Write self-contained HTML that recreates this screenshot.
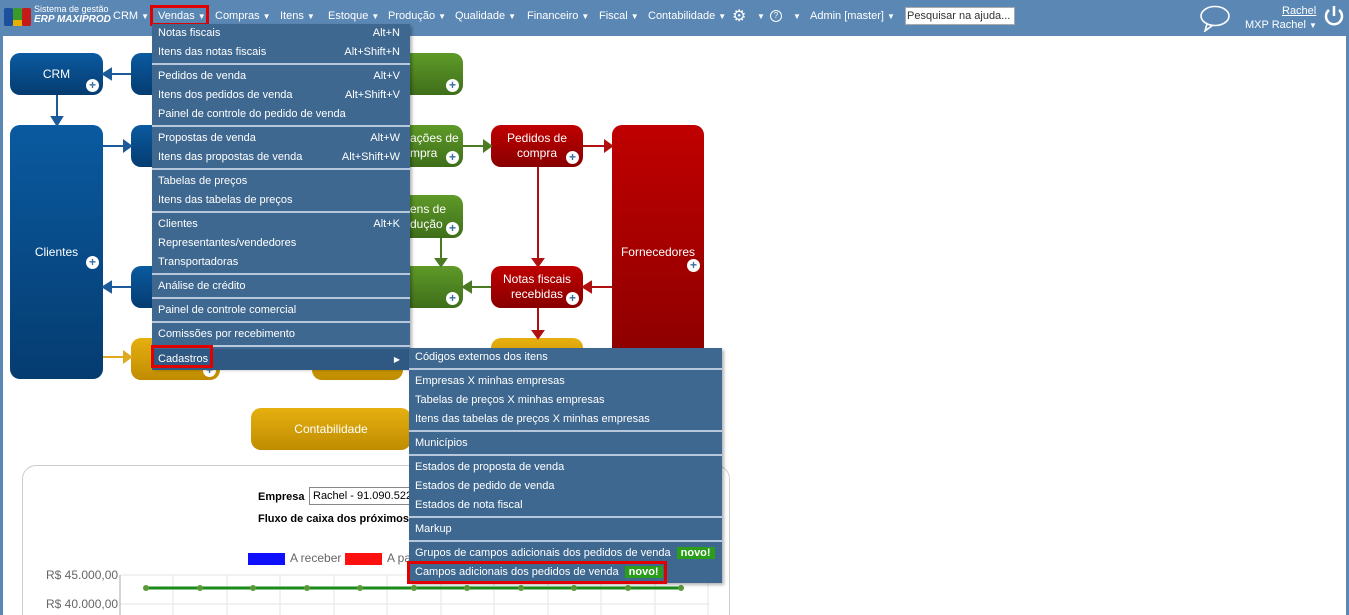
<!DOCTYPE html>
<html style="overflow:hidden;height:615px"><head><meta charset="utf-8"><style>
*{box-sizing:border-box;margin:0;padding:0}
body{width:1349px;height:615px;overflow:hidden;background:#5b87b4;font-family:"Liberation Sans",sans-serif;position:relative}
.page{position:absolute;left:3px;top:36px;width:1343px;height:579px;background:#fff;overflow:hidden}
.bar{position:absolute;top:0;left:0;width:1349px;height:36px;color:#fff;font-size:11px}
.bar span.m{position:absolute;top:10px;white-space:nowrap}
.tri{font-size:8px;margin-left:3px}
.box{position:absolute;border-radius:10px;color:#fff;font-size:12px;text-align:center;display:flex;align-items:center;justify-content:center;line-height:15px;white-space:nowrap;overflow:hidden}
.blue{background:linear-gradient(#0a5aa0,#053c70)}
.green{background:linear-gradient(#5e9a28,#3f6e1a)}
.red{background:linear-gradient(#c00000,#880000)}
.yel{background:linear-gradient(#e6b010,#bf8c00)}
.plus{position:absolute;right:4px;bottom:3px;width:13px;height:13px;border-radius:50%;background:#fff;color:#3a6da0;font-size:12px;line-height:12px;text-align:center;font-weight:bold}
.menu{position:absolute;background:#3f6890;color:#fff;font-size:11px;box-shadow:2px 2px 3px rgba(0,0,0,.3)}
.menu div.i{height:19px;line-height:19px;padding-left:6px;position:relative;white-space:nowrap}
.menu div.i b{position:absolute;right:10px;font-weight:normal}
.menu div.s{height:5px;position:relative}
.menu div.s:after{content:"";position:absolute;left:0;right:0;top:1px;height:2px;background:#b8c8dc}
.novo{background:#2a9d1a;color:#fff;font-weight:bold;padding:0 4px;margin-left:6px;font-size:11px}
.redbox{position:absolute;border:3px solid #e00000}
</style></head><body>
<div class="page">
<div style="position:absolute;left:19px;top:429px;width:708px;height:170px;border:1px solid #ccc;border-radius:14px;background:#fff"></div>
</div>
<div class="bar">
<div style="position:absolute;left:4px;top:8px;width:9px;height:18px;background:#1c4f9c;border-radius:2px"></div>
<div style="position:absolute;left:13px;top:8px;width:9px;height:18px;background:#3a9a2a;border-radius:2px"></div>
<div style="position:absolute;left:13px;top:20px;width:9px;height:6px;background:#e8b000"></div>
<div style="position:absolute;left:22px;top:8px;width:9px;height:18px;background:#c41a1a;border-radius:2px"></div>
<div style="position:absolute;left:34px;top:4px;font-size:9px;line-height:10px">Sistema de gestão<br><i style="font-weight:bold;font-size:10px">ERP MAXIPROD</i></div>
<span class="m" style="left:113px">CRM<span class="tri">▼</span></span>
<span class="m" style="left:158px">Vendas<span class="tri">▼</span></span>
<span class="m" style="left:215px">Compras<span class="tri">▼</span></span>
<span class="m" style="left:280px">Itens<span class="tri">▼</span></span>
<span class="m" style="left:328px">Estoque<span class="tri">▼</span></span>
<span class="m" style="left:388px">Produção<span class="tri">▼</span></span>
<span class="m" style="left:455px">Qualidade<span class="tri">▼</span></span>
<span class="m" style="left:527px">Financeiro<span class="tri">▼</span></span>
<span class="m" style="left:599px">Fiscal<span class="tri">▼</span></span>
<span class="m" style="left:648px">Contabilidade<span class="tri">▼</span></span>
<span class="m" style="left:732px;top:6px;font-size:16px">⚙</span><span class="m" style="left:754px"><span class="tri">▼</span></span>
<span class="m" style="left:770px;top:10px;width:12px;height:12px;border:1.5px solid #fff;border-radius:50%;font-size:8px;text-align:center;line-height:9px">?</span><span class="m" style="left:790px"><span class="tri">▼</span></span>
<span class="m" style="left:810px">Admin [master]<span class="tri">▼</span></span>
<div style="position:absolute;left:905px;top:7px;width:110px;height:18px;background:#fff;border:1px solid #aaa;color:#333;font-size:11px;padding:2px 1px">Pesquisar na ajuda...</div>
<svg style="position:absolute;left:1199px;top:4px" width="33" height="28"><ellipse cx="16" cy="12" rx="14" ry="9.5" fill="none" stroke="#fff" stroke-width="1.6"/><path d="M8 20 L6 27 L14 21" fill="none" stroke="#fff" stroke-width="1.6"/></svg>
<span class="m" style="left:1282px;top:5px;text-decoration:underline">Rachel</span>
<span class="m" style="left:1245px;top:19px">MXP Rachel<span class="tri">▼</span></span>
<svg style="position:absolute;left:1323px;top:4px" width="22" height="24"><path d="M6 6 A8 8 0 1 0 16 6" fill="none" stroke="#fff" stroke-width="2.5"/><line x1="11" y1="2" x2="11" y2="12" stroke="#fff" stroke-width="2.5"/></svg>
</div>
<div class="redbox" style="left:150px;top:5px;width:59px;height:21px"></div>

<div class="box blue" style="left:10px;top:53px;width:93px;height:42px">CRM<span class="plus">+</span></div>
<div class="box blue" style="left:131px;top:53px;width:40px;height:42px"></div>
<div class="box green" style="left:400px;top:53px;width:63px;height:42px"><span class="plus">+</span></div>
<div class="box blue" style="left:10px;top:125px;width:93px;height:254px">Clientes<span class="plus" style="bottom:110px">+</span></div>
<div class="box blue" style="left:131px;top:125px;width:40px;height:42px"></div>
<div class="box green" style="left:400px;top:125px;width:63px;height:42px;justify-content:flex-start;padding-left:10px;text-align:left">ações de<br>mpra<span class="plus">+</span></div>
<div class="box red" style="left:491px;top:125px;width:92px;height:42px">Pedidos de<br>compra<span class="plus">+</span></div>
<div class="box red" style="left:612px;top:125px;width:92px;height:255px">Fornecedores<span class="plus" style="bottom:108px">+</span></div>
<div class="box green" style="left:400px;top:195px;width:63px;height:43px;justify-content:flex-start;padding-left:10px;text-align:left">ens de<br>dução<span class="plus">+</span></div>
<div class="box green" style="left:400px;top:266px;width:63px;height:42px"><span class="plus">+</span></div>
<div class="box red" style="left:491px;top:266px;width:92px;height:42px">Notas fiscais<br>recebidas<span class="plus">+</span></div>
<div class="box blue" style="left:131px;top:266px;width:40px;height:42px"></div>
<div class="box yel" style="left:131px;top:338px;width:89px;height:42px"><span class="plus">+</span></div>
<div class="box yel" style="left:312px;top:338px;width:91px;height:42px"></div>
<div class="box yel" style="left:491px;top:338px;width:92px;height:42px"></div>
<div class="box yel" style="left:251px;top:408px;width:160px;height:42px">Contabilidade</div>
<svg style="position:absolute;left:0;top:0" width="720" height="400">
<g stroke="#1c5a9a" stroke-width="2" fill="#1c5a9a"><line x1="57" y1="95" x2="57" y2="118"/><path d="M52 117 L62 117 L57 125Z"/>
<line x1="103" y1="146" x2="125" y2="146"/><path d="M124 141 L131 146 L124 151Z"/>
<line x1="111" y1="74" x2="131" y2="74"/><path d="M111 69 L103 74 L111 79Z"/>
<line x1="111" y1="287" x2="131" y2="287"/><path d="M111 282 L103 287 L111 292Z"/></g>
<g stroke="#4a7a22" stroke-width="2" fill="#4a7a22"><line x1="463" y1="146" x2="484" y2="146"/><path d="M484 141 L491 146 L484 151Z"/>
<line x1="441" y1="238" x2="441" y2="259"/><path d="M436 259 L446 259 L441 266Z"/>
<line x1="471" y1="287" x2="491" y2="287"/><path d="M471 282 L463 287 L471 292Z"/></g>
<g stroke="#b01010" stroke-width="2" fill="#b01010"><line x1="583" y1="146" x2="605" y2="146"/><path d="M605 141 L612 146 L605 151Z"/>
<line x1="538" y1="167" x2="538" y2="259"/><path d="M533 259 L543 259 L538 266Z"/>
<line x1="591" y1="287" x2="612" y2="287"/><path d="M591 282 L583 287 L591 292Z"/>
<line x1="538" y1="308" x2="538" y2="331"/><path d="M533 331 L543 331 L538 338Z"/></g>
<g stroke="#e0a820" stroke-width="2" fill="#e0a820"><line x1="103" y1="357" x2="124" y2="357"/><path d="M124 352 L131 357 L124 362Z"/></g>
</svg>

<div style="position:absolute;left:258px;top:491px;font-size:11px;font-weight:bold">Empresa</div>
<div style="position:absolute;left:309px;top:487px;width:110px;height:18px;border:1px solid #888;font-size:11px;padding:2px 3px;overflow:hidden;white-space:nowrap">Rachel - 91.090.522</div>
<div style="position:absolute;left:258px;top:513px;font-size:11px;font-weight:bold;white-space:nowrap">Fluxo de caixa dos próximos</div>
<div style="position:absolute;left:248px;top:553px;width:37px;height:12px;background:#1010ff"></div>
<div style="position:absolute;left:290px;top:551px;font-size:12px;color:#666">A receber</div>
<div style="position:absolute;left:345px;top:553px;width:37px;height:12px;background:#ff1010"></div>
<div style="position:absolute;left:387px;top:551px;font-size:12px;color:#666">A pa</div>
<div style="position:absolute;left:46px;top:568px;font-size:12px;color:#666">R$ 45.000,00</div>
<div style="position:absolute;left:46px;top:597px;font-size:12px;color:#666">R$ 40.000,00</div>
<svg style="position:absolute;left:110px;top:570px" width="600" height="45">
<g stroke="#e6e6e6"><line x1="10" y1="5" x2="600" y2="5"/><line x1="10" y1="34" x2="600" y2="34"/>
<line x1="63" y1="5" x2="63" y2="45"/><line x1="117" y1="5" x2="117" y2="45"/><line x1="170" y1="5" x2="170" y2="45"/><line x1="224" y1="5" x2="224" y2="45"/><line x1="277" y1="5" x2="277" y2="45"/><line x1="331" y1="5" x2="331" y2="45"/><line x1="384" y1="5" x2="384" y2="45"/><line x1="438" y1="5" x2="438" y2="45"/><line x1="491" y1="5" x2="491" y2="45"/><line x1="545" y1="5" x2="545" y2="45"/><line x1="598" y1="5" x2="598" y2="45"/></g>
<line x1="10" y1="5" x2="10" y2="45" stroke="#aaa"/>
<line x1="36" y1="18" x2="571" y2="18" stroke="#1a8a1a" stroke-width="3"/>
<g fill="#5a9a3a"><circle cx="36" cy="18" r="3"/><circle cx="90" cy="18" r="3"/><circle cx="143" cy="18" r="3"/><circle cx="197" cy="18" r="3"/><circle cx="250" cy="18" r="3"/><circle cx="304" cy="18" r="3"/><circle cx="357" cy="18" r="3"/><circle cx="411" cy="18" r="3"/><circle cx="464" cy="18" r="3"/><circle cx="518" cy="18" r="3"/><circle cx="571" cy="18" r="3"/></g>
</svg>

<div class="menu" style="left:152px;top:24px;width:258px;height:344px">
<div class="i">Notas fiscais<b>Alt+N</b></div>
<div class="i">Itens das notas fiscais<b>Alt+Shift+N</b></div><div class="s"></div>
<div class="i">Pedidos de venda<b>Alt+V</b></div>
<div class="i">Itens dos pedidos de venda<b>Alt+Shift+V</b></div>
<div class="i">Painel de controle do pedido de venda</div><div class="s"></div>
<div class="i">Propostas de venda<b>Alt+W</b></div>
<div class="i">Itens das propostas de venda<b>Alt+Shift+W</b></div><div class="s"></div>
<div class="i">Tabelas de preços</div>
<div class="i">Itens das tabelas de preços</div><div class="s"></div>
<div class="i">Clientes<b>Alt+K</b></div>
<div class="i">Representantes/vendedores</div>
<div class="i">Transportadoras</div><div class="s"></div>
<div class="i">Análise de crédito</div><div class="s"></div>
<div class="i">Painel de controle comercial</div><div class="s"></div>
<div class="i">Comissões por recebimento</div><div class="s"></div>
<div class="i" style="background:#2f5882;height:21px;line-height:21px">Cadastros<b style="font-size:8px">▶</b></div>
</div>
<div class="redbox" style="left:151px;top:345px;width:62px;height:23px"></div>
<div class="menu" style="left:409px;top:348px;width:313px;height:235px">
<div class="i">Códigos externos dos itens</div><div class="s"></div>
<div class="i">Empresas X minhas empresas</div>
<div class="i">Tabelas de preços X minhas empresas</div>
<div class="i">Itens das tabelas de preços X minhas empresas</div><div class="s"></div>
<div class="i">Municípios</div><div class="s"></div>
<div class="i">Estados de proposta de venda</div>
<div class="i">Estados de pedido de venda</div>
<div class="i">Estados de nota fiscal</div><div class="s"></div>
<div class="i">Markup</div><div class="s"></div>
<div class="i">Grupos de campos adicionais dos pedidos de venda<span class="novo">novo!</span></div>
<div class="i">Campos adicionais dos pedidos de venda<span class="novo">novo!</span></div>
</div>
<div class="redbox" style="left:407px;top:561px;width:260px;height:23px"></div>
</body></html>
